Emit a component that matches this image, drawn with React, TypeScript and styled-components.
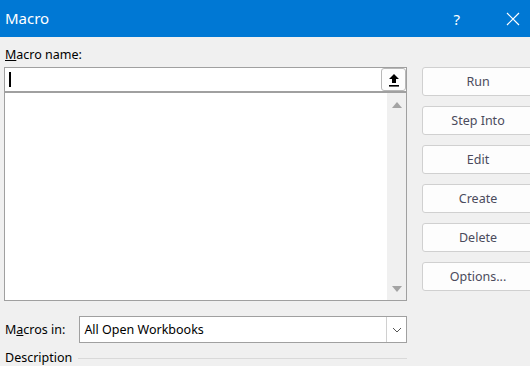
import styled, { createGlobalStyle } from "styled-components";

const GlobalStyle = createGlobalStyle`
  html, body {
    margin: 0;
    padding: 0;
    background: #f0f0f0;
  }
  body {
    font-family: "Noto Sans", "Open Sans", sans-serif;
  }
`;

const buttons = ["Run", "Step Into", "Edit", "Create", "Delete", "Options..."];

function App() {
  return (
    <>
      <GlobalStyle />
      <Dialog>
        <TitleBar>
          <Title>Macro</Title>
          <TitleIcons>
            <Help>?</Help>
            <svg width="14" height="14" viewBox="0 0 14 14">
              <path d="M1 1 L13 13 M13 1 L1 13" stroke="white" strokeWidth="1.2" />
            </svg>
          </TitleIcons>
        </TitleBar>
        <Body>
          <LeftCol>
            <Label>
              <u>M</u>acro name:
            </Label>
            <NameInput>
              <Caret />
              <UpButton>
                <svg width="12" height="14" viewBox="0 0 12 14">
                  <path d="M6 1 L11 6 L8 6 L8 10 L4 10 L4 6 L1 6 Z" fill="#000" />
                  <rect x="1" y="12" width="10" height="1.6" fill="#000" />
                </svg>
              </UpButton>
            </NameInput>
            <ListBox>
              <ListArea />
              <ScrollBar>
                <Arrow dir="up" />
                <Arrow dir="down" />
              </ScrollBar>
            </ListBox>
            <ComboRow>
              <Label>
                M<u>a</u>cros in:
              </Label>
              <Combo>
                <ComboText>All Open Workbooks</ComboText>
                <ComboButton>
                  <svg width="10" height="6" viewBox="0 0 10 6">
                    <path d="M1 1 L5 5 L9 1" stroke="#555" strokeWidth="1" fill="none" />
                  </svg>
                </ComboButton>
              </Combo>
            </ComboRow>
            <DescRow>
              <Label>Description</Label>
              <Rule />
            </DescRow>
          </LeftCol>
          <RightCol>
            {buttons.map((b) => (
              <Btn key={b}>{b}</Btn>
            ))}
          </RightCol>
        </Body>
      </Dialog>
    </>
  );
}

const Dialog = styled.div`
  width: 530px;
  height: 366px;
  overflow: hidden;
  background: #f0f0f0;
`;

const TitleBar = styled.div`
  height: 37px;
  background: #0078d4;
  display: flex;
  align-items: center;
  justify-content: space-between;
  padding: 0 10px 0 5px;
  color: white;
`;

const Title = styled.div`
  font-size: 15px;
  padding-bottom: 1px;
`;

const TitleIcons = styled.div`
  display: flex;
  align-items: center;
  gap: 46px;
`;

const Help = styled.span`
  font-size: 15px;
`;

const Body = styled.div`
  display: flex;
  gap: 15px;
  padding: 9px 0 0 4px;
`;

const LeftCol = styled.div`
  width: 403px;
  flex-shrink: 0;
  display: flex;
  flex-direction: column;
`;

const Label = styled.div`
  font-size: 12.5px;
  color: #000;
  line-height: 17px;
  padding-left: 1px;
  white-space: nowrap;
`;

const NameInput = styled.div`
  margin-top: 4px;
  height: 23px;
  border: 1px solid #a0a0a0;
  border-bottom: 2px solid #a0a0a0;
  background: white;
  display: flex;
  align-items: center;
  justify-content: space-between;
  padding: 0 0 0 4px;
`;

const Caret = styled.div`
  width: 1.5px;
  height: 15px;
  background: #000;
`;

const UpButton = styled.div`
  width: 25px;
  height: 23px;
  border: 1px solid #b8b8b8;
  border-radius: 3px;
  background: #fdfdfd;
  display: flex;
  align-items: center;
  justify-content: center;
  box-sizing: border-box;
`;

const ListBox = styled.div`
  height: 207px;
  border: 1px solid #a0a0a0;
  border-top: none;
  background: white;
  display: flex;
`;

const ListArea = styled.div`
  flex: 1;
`;

const ScrollBar = styled.div`
  width: 19px;
  background: #f0f0f0;
  display: flex;
  flex-direction: column;
  justify-content: space-between;
  align-items: center;
  padding: 9px 0 8px;
`;

const Arrow = styled.div<{ dir: "up" | "down" }>`
  width: 0;
  height: 0;
  border-left: 5px solid transparent;
  border-right: 5px solid transparent;
  ${(p) =>
    p.dir === "up"
      ? "border-bottom: 6px solid #a3a3a3;"
      : "border-top: 6px solid #a3a3a3;"}
`;

const ComboRow = styled.div`
  display: flex;
  align-items: center;
  gap: 14px;
  margin-top: 15px;
`;

const Combo = styled.div`
  flex: 1;
  height: 27px;
  box-sizing: border-box;
  border: 1px solid #a0a0a0;
  background: white;
  display: flex;
  align-items: center;
`;

const ComboText = styled.div`
  flex: 1;
  font-size: 12.5px;
  padding-left: 4px;
  color: #000;
`;

const ComboButton = styled.div`
  width: 19px;
  height: 25px;
  border-left: 1px solid #d0d0d0;
  display: flex;
  align-items: center;
  justify-content: center;
`;

const DescRow = styled.div`
  display: flex;
  align-items: center;
  gap: 6px;
  margin-top: 6px;
`;

const Rule = styled.div`
  flex: 1;
  height: 1px;
  background: #d9d9d9;
  margin-top: 1px;
`;

const RightCol = styled.div`
  display: flex;
  flex-direction: column;
  flex-shrink: 0;
  gap: 10px;
  padding-top: 21px;
`;

const Btn = styled.div`
  width: 112px;
  height: 29px;
  box-sizing: border-box;
  border: 1px solid #d0d0d0;
  border-radius: 3px;
  background: #fdfdfd;
  color: #4b4b5c;
  font-size: 12.5px;
  display: flex;
  align-items: center;
  justify-content: center;
  padding-bottom: 1px;
`;

export default App;
